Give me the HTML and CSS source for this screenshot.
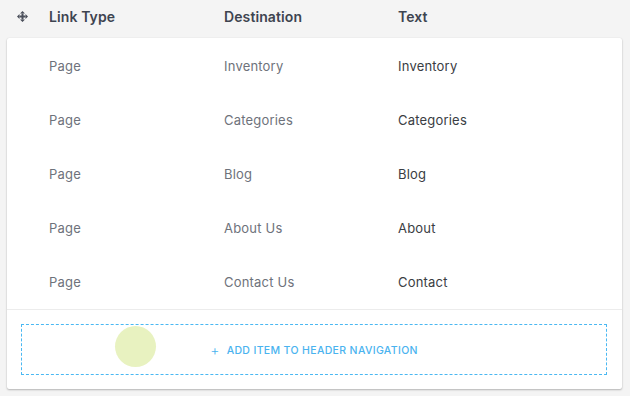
FILE: index.html
```html
<!DOCTYPE html>
<html>
<head>
<meta charset="utf-8">
<link rel="stylesheet" href="styles.css">
</head>
<body>
<div class="page">
  <div class="head">
    <div class="hcell icon-cell">
      <svg class="move" width="11" height="11" viewBox="0 0 11 11">
        <path d="M5.5 0 L8 2.5 L3 2.5 Z M5.5 11 L8 8.5 L3 8.5 Z M0 5.5 L2.5 3 L2.5 8 Z M11 5.5 L8.5 3 L8.5 8 Z" fill="#4a4f5a"/>
        <rect x="4.5" y="2.5" width="2" height="6" fill="#4a4f5a"/>
        <rect x="2.5" y="4.5" width="6" height="2" fill="#4a4f5a"/>
      </svg>
    </div>
    <div class="hcell">Link Type</div>
    <div class="hcell">Destination</div>
    <div class="hcell">Text</div>
  </div>
  <div class="card">
    <div class="row"><span></span><span class="muted">Page</span><span class="muted">Inventory</span><span class="dark">Inventory</span></div>
    <div class="row"><span></span><span class="muted">Page</span><span class="muted">Categories</span><span class="dark">Categories</span></div>
    <div class="row"><span></span><span class="muted">Page</span><span class="muted">Blog</span><span class="dark">Blog</span></div>
    <div class="row"><span></span><span class="muted">Page</span><span class="muted">About Us</span><span class="dark">About</span></div>
    <div class="row"><span></span><span class="muted">Page</span><span class="muted">Contact Us</span><span class="dark">Contact</span></div>
    <div class="footer">
      <div class="add">
        <span class="plus">+</span><span>ADD ITEM TO HEADER NAVIGATION</span>
        <span class="touch"></span>
      </div>
    </div>
  </div>
</div>
</body>
</html>
```
FILE: styles.css
```css
* { box-sizing: border-box; }
html, body { margin: 0; padding: 0; }
body {
  background: #f4f4f4;
  font-family: Inter, "Noto Sans", sans-serif;
  font-size: 13px;
  width: 630px;
  height: 396px;
  overflow: hidden;
}
.page { padding: 0 8px 0 7px; }
.head {
  display: grid;
  grid-template-columns: 42px 175px 174px 1fr;
  height: 38px;
  align-items: center;
  font-size: 14px;
  font-weight: 600;
  letter-spacing: 0.1px;
  color: #3e4450;
  padding-bottom: 6px;
}
.icon-cell { display: flex; align-items: center; padding-left: 10px; }
.move { display: block; }
.card {
  background: #fff;
  border-radius: 2px;
  box-shadow: 0 1px 2px rgba(0,0,0,0.25), 0 0 1px rgba(0,0,0,0.12);
  padding-top: 1px;
}
.row {
  display: grid;
  grid-template-columns: 42px 175px 174px 1fr;
  height: 54px;
  align-items: center;
  letter-spacing: 0.2px;
}
.muted { color: #6e727b; }
.dark { color: #3a3d43; }
.footer {
  border-top: 1px solid #ececec;
  padding: 14px 15px 14px 14px;
}
.add {
  position: relative;
  height: 51px;
  border: 1px dashed #4ab8f2;
  display: flex;
  align-items: center;
  justify-content: center;
  color: #4ab3ef;
  font-size: 10.5px;
  font-weight: 500;
  letter-spacing: 0.35px;
  padding-top: 2px;
}
.plus { font-size: 14px; font-weight: 300; margin-right: 7px; margin-top: -2px; }
.touch {
  position: absolute;
  left: 93px;
  top: 1px;
  width: 41px;
  height: 41px;
  border-radius: 50%;
  background: #e8f2c0;
}
```
